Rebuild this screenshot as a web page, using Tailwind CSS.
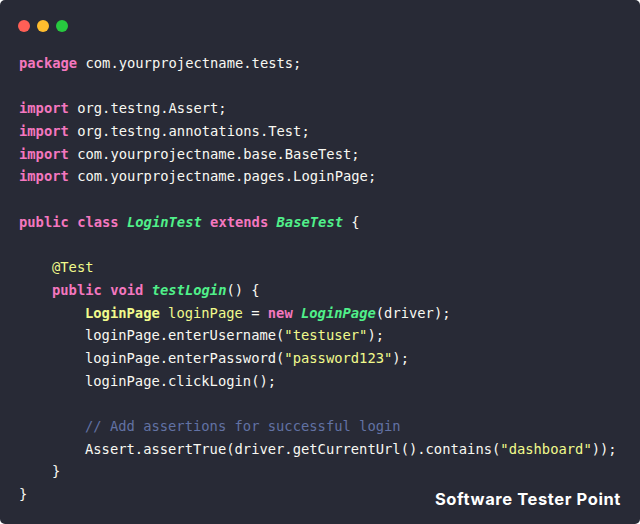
<!DOCTYPE html>
<html lang="en">
<head>
    <meta charset="UTF-8">
    <meta name="viewport" content="width=device-width, initial-scale=1.0">
    <title>LoginTest</title>
    <script src="https://cdn.jsdelivr.net/npm/@tailwindcss/browser@4"></script>
</head>
<body class="bg-white">
    <div class="relative w-[640px] h-[524px] overflow-hidden rounded-[5px] bg-[#282a36] pt-[20px]">
        <div class="flex gap-[7px] pl-[18px]">
            <span class="w-[12px] h-[12px] rounded-full bg-[#ff5f56]"></span>
            <span class="w-[12px] h-[12px] rounded-full bg-[#ffbd2e]"></span>
            <span class="w-[12px] h-[12px] rounded-full bg-[#27c93f]"></span>
        </div>
        <div class="mt-[20px] pl-[19px] font-['DejaVu_Sans_Mono',monospace] text-[13.8px] leading-[22.7px] text-[#f8f8f2]">
            <div class="h-[22.7px] whitespace-pre"><b class="font-bold text-[#f477bf]">package</b> com.yourprojectname.tests;</div>
            <div class="h-[22.7px]"></div>
            <div class="h-[22.7px] whitespace-pre"><b class="font-bold text-[#f477bf]">import</b> org.testng.Assert;</div>
            <div class="h-[22.7px] whitespace-pre"><b class="font-bold text-[#f477bf]">import</b> org.testng.annotations.Test;</div>
            <div class="h-[22.7px] whitespace-pre"><b class="font-bold text-[#f477bf]">import</b> com.yourprojectname.base.BaseTest;</div>
            <div class="h-[22.7px] whitespace-pre"><b class="font-bold text-[#f477bf]">import</b> com.yourprojectname.pages.LoginPage;</div>
            <div class="h-[22.7px]"></div>
            <div class="h-[22.7px] whitespace-pre"><b class="font-bold text-[#f477bf]">public class</b> <i class="font-bold text-[#50f08a]">LoginTest</i> <b class="font-bold text-[#f477bf]">extends</b> <i class="font-bold text-[#50f08a]">BaseTest</i> {</div>
            <div class="h-[22.7px]"></div>
            <div class="h-[22.7px] whitespace-pre pl-[33px] text-[#f1fa8c]">@Test</div>
            <div class="h-[22.7px] whitespace-pre pl-[33px]"><b class="font-bold text-[#f477bf]">public void</b> <i class="font-bold text-[#50f08a]">testLogin</i>() {</div>
            <div class="h-[22.7px] whitespace-pre pl-[66px]"><b class="font-bold text-[#f1fa8c]">LoginPage</b> <span class="text-[#f1fa8c]">loginPage</span> = <b class="font-bold text-[#f477bf]">new</b> <i class="font-bold text-[#50f08a]">LoginPage</i>(driver);</div>
            <div class="h-[22.7px] whitespace-pre pl-[66px]">loginPage.enterUsername(<span class="text-[#f1fa8c]">"testuser"</span>);</div>
            <div class="h-[22.7px] whitespace-pre pl-[66px]">loginPage.enterPassword(<span class="text-[#f1fa8c]">"password123"</span>);</div>
            <div class="h-[22.7px] whitespace-pre pl-[66px]">loginPage.clickLogin();</div>
            <div class="h-[22.7px]"></div>
            <div class="h-[22.7px] whitespace-pre pl-[66px] text-[#6272a4]">// Add assertions for successful login</div>
            <div class="h-[22.7px] whitespace-pre pl-[66px]">Assert.assertTrue(driver.getCurrentUrl().contains(<span class="text-[#f1fa8c]">"dashboard"</span>));</div>
            <div class="h-[22.7px] whitespace-pre pl-[33px]">}</div>
            <div class="h-[22.7px] whitespace-pre">}</div>
        </div>
        <p class="absolute right-[19px] bottom-[15px] font-['Inter',sans-serif] font-bold text-[16.5px] tracking-[0.6px] leading-[20px] text-white">Software Tester Point</p>
    </div>
</body>
</html>
